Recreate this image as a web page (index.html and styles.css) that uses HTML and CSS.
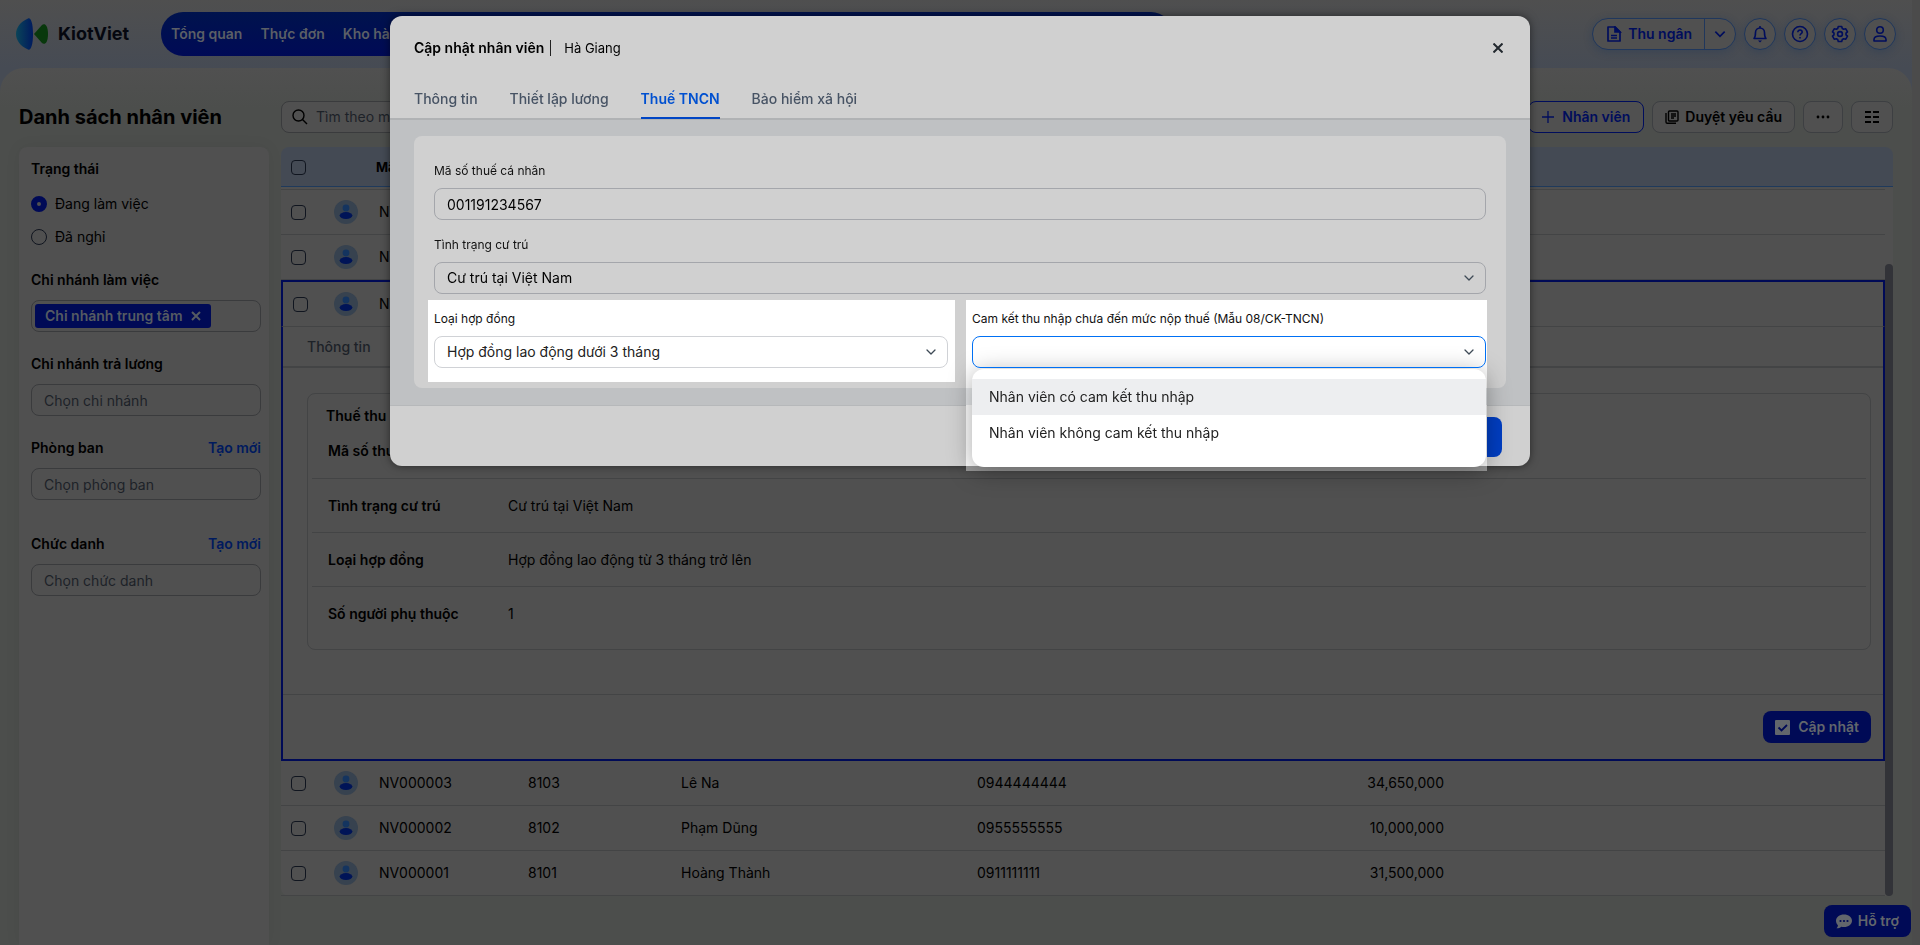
FILE: index.html
```html
<!DOCTYPE html>
<html lang="vi">
<head>
    <meta charset="UTF-8">
    <meta name="viewport" content="width=device-width, initial-scale=1.0">
    <title>Danh sách nhân viên - KiotViet</title>
    <link rel="stylesheet" href="styles.css">
</head>
<body>
    <svg class="sprite" aria-hidden="true">
        <symbol id="avatar" viewBox="0 0 24 24">
            <circle cx="12" cy="12" r="12" fill="#37424f"/>
            <circle cx="12" cy="8" r="3.4" fill="#14345f"/>
            <ellipse cx="12" cy="15.6" rx="6.4" ry="3.5" fill="#001457"/>
        </symbol>
        <symbol id="chevron" viewBox="0 0 12 12">
            <path d="M2 4l4 4 4-4" fill="none" stroke="currentColor" stroke-width="1.3" stroke-linecap="round" stroke-linejoin="round"/>
        </symbol>
    </svg>

    <header class="header">
        <a class="logo" href="#">
            <svg width="32" height="32" viewBox="0 0 32 32">
                <defs>
                    <linearGradient id="logo-blue" x1="0" x2="1">
                        <stop offset="0" stop-color="#0a4458"/>
                        <stop offset="1" stop-color="#001a5e"/>
                    </linearGradient>
                </defs>
                <path d="M12 0.5C14.500 -1 17 4 17 16s-2.500 17-5 15.500C4 28 0 22 0 16S4 4 12 0.500z" fill="url(#logo-blue)"/>
                <path d="M18 16l8-9c2-2 6-1 6 9s-4 11-6 9z" fill="#08380c"/>
            </svg>
            <span>KiotViet</span>
        </a>
        <nav class="main-nav">
            <a href="#">Tổng quan</a>
            <a href="#">Thực đơn</a>
            <a href="#">Kho hàng</a>
        </nav>
        <div class="header-tools">
            <div class="cashier">
                <button type="button" class="cashier-main">
                    <svg width="16" height="16" viewBox="0 0 16 16" fill="none" stroke="currentColor" stroke-width="1.7">
                        <path d="M2 1h7l5 5v9H2z" stroke-linejoin="round"/>
                        <path d="M9 1v5h5z" fill="currentColor"/>
                        <path d="M5 9.500h6M5 12h6"/>
                    </svg>
                    Thu ngân
                </button>
                <button type="button" class="cashier-more" aria-label="Mở thêm">
                    <svg width="14" height="14" viewBox="0 0 12 12"><path d="M2 4l4 4 4-4" fill="none" stroke="currentColor" stroke-width="1.4"/></svg>
                </button>
            </div>
            <button type="button" class="round-button" aria-label="Thông báo">
                <svg width="18" height="18" viewBox="0 0 18 18" fill="none" stroke="currentColor" stroke-width="1.6">
                    <path d="M3 13.500c1.500-1.500 1.500-3 1.500-6a4.500 4.500 0 0 1 9 0c0 3 0 4.500 1.500 6z" stroke-linejoin="round"/>
                    <path d="M9 1v2"/>
                    <path d="M7 15.500h4l-2 2z" fill="currentColor" stroke="none"/>
                </svg>
            </button>
            <button type="button" class="round-button" aria-label="Trợ giúp">
                <svg width="18" height="18" viewBox="0 0 18 18" fill="none" stroke="currentColor" stroke-width="1.6">
                    <circle cx="9" cy="9" r="7.500"/>
                    <path d="M6.800 7.200c0-3 4.600-2.800 4.400 0-.1 1.400-2.200 1.500-2.200 3.200M9 11.900v1.600"/>
                </svg>
            </button>
            <button type="button" class="round-button" aria-label="Thiết lập">
                <svg width="18" height="18" viewBox="0 0 18 18" fill="none" stroke="currentColor" stroke-width="1.6">
                    <path d="M7.300 1.500h3.400l.6 2 1.400.8 2.100-.5 1.700 3L15 8.200v1.600l1.500 1.400-1.700 3-2.100-.5-1.400.8-.6 2H7.300l-.6-2-1.400-.8-2.100.5-1.700-3L3 9.800V8.200L1.500 6.800l1.700-3 2.100.5 1.400-.8z" stroke-linejoin="round"/>
                    <circle cx="9" cy="9" r="2.400"/>
                </svg>
            </button>
            <button type="button" class="round-button" aria-label="Tài khoản">
                <svg width="18" height="18" viewBox="0 0 18 18" fill="none" stroke="currentColor" stroke-width="1.6">
                    <circle cx="9" cy="5" r="3.300"/>
                    <path d="M3 16v-1.500C3 12 5 11 9 11s6 1 6 3.500V16z" stroke-linejoin="round"/>
                </svg>
            </button>
        </div>
    </header>

    <main class="content">
        <h1 class="page-title">Danh sách nhân viên</h1>

        <div class="toolbar">
            <label class="search">
                <svg width="16" height="16" viewBox="0 0 16 16" fill="none" stroke="currentColor" stroke-width="1.4">
                    <circle cx="6.500" cy="6.500" r="5.500"/>
                    <path d="M10.500 10.500L15 15"/>
                </svg>
                <input type="text" placeholder="Tìm theo mã, tên nhân viên" aria-label="Tìm kiếm">
            </label>
            <div class="actions">
                <button type="button" class="action primary">
                    <svg width="12" height="12" viewBox="0 0 12 12" stroke="currentColor" stroke-width="1.3"><path d="M6 0v12M0 6h12"/></svg>
                    Nhân viên
                </button>
                <button type="button" class="action">
                    <svg width="14" height="14" viewBox="0 0 14 14" fill="none" stroke="currentColor" stroke-width="1.4">
                        <rect x="3.500" y="1" width="9.500" height="10" rx="1"/>
                        <path d="M1 3v9q0 1.300 1.300 1.300H11M6 4h5M6 6h5M6 8h3"/>
                    </svg>
                    Duyệt yêu cầu
                </button>
                <button type="button" class="action action-dots" aria-label="Thao tác khác">
                    <svg width="14" height="4" viewBox="0 0 14 4" fill="currentColor"><circle cx="2" cy="2" r="1.400"/><circle cx="7" cy="2" r="1.400"/><circle cx="12" cy="2" r="1.400"/></svg>
                </button>
                <button type="button" class="action action-columns" aria-label="Chọn cột">
                    <svg width="14" height="12" viewBox="0 0 14 12" stroke="currentColor" stroke-width="2"><path d="M0 1h6M8 1h6M0 6h6M8 6h6M0 11h6M8 11h6"/></svg>
                </button>
            </div>
        </div>

        <aside class="filters">
            <fieldset class="filter">
                <legend class="filter-title">Trạng thái</legend>
                <label class="option"><input type="radio" name="status" checked> Đang làm việc</label>
                <label class="option"><input type="radio" name="status"> Đã nghỉ</label>
            </fieldset>
            <div class="filter">
                <div class="filter-title">Chi nhánh làm việc</div>
                <div class="tag-box">
                    <button type="button" class="tag">Chi nhánh trung tâm
                        <svg width="10" height="10" viewBox="0 0 10 10" stroke="currentColor" stroke-width="2"><path d="M1 1l8 8M9 1L1 9"/></svg>
                    </button>
                </div>
            </div>
            <div class="filter">
                <label class="filter-title" for="payroll-branch">Chi nhánh trả lương</label>
                <input class="filter-input" id="payroll-branch" type="text" placeholder="Chọn chi nhánh">
            </div>
            <div class="filter filter-wide">
                <div class="filter-title">
                    <label for="department">Phòng ban</label>
                    <a href="#">Tạo mới</a>
                </div>
                <input class="filter-input" id="department" type="text" placeholder="Chọn phòng ban">
            </div>
            <div class="filter">
                <div class="filter-title">
                    <label for="position">Chức danh</label>
                    <a href="#">Tạo mới</a>
                </div>
                <input class="filter-input" id="position" type="text" placeholder="Chọn chức danh">
            </div>
        </aside>

        <section class="grid-wrap">
            <table class="grid">
                <colgroup>
                    <col class="col-check"><col class="col-avatar"><col class="col-code"><col class="col-timekeeping">
                    <col class="col-name"><col class="col-phone"><col class="col-salary"><col>
                </colgroup>
                <thead>
                    <tr>
                        <th><input type="checkbox" aria-label="Chọn tất cả"></th>
                        <th></th>
                        <th class="head-code" colspan="6">Mã NV</th>
                    </tr>
                </thead>
                <tbody>
                    <tr class="spacer"><td colspan="8"></td></tr>
                    <tr>
                        <td><input type="checkbox" aria-label="Chọn NV000006"></td>
                        <td><svg class="avatar"><use href="#avatar"/></svg></td>
                        <td colspan="6">NV000006</td>
                    </tr>
                    <tr>
                        <td><input type="checkbox" aria-label="Chọn NV000005"></td>
                        <td><svg class="avatar"><use href="#avatar"/></svg></td>
                        <td colspan="6">NV000005</td>
                    </tr>
                    <tr class="selected">
                        <td><input type="checkbox" aria-label="Chọn NV000004"></td>
                        <td><svg class="avatar"><use href="#avatar"/></svg></td>
                        <td colspan="6">NV000004</td>
                    </tr>
                    <tr class="detail">
                        <td colspan="8">
                            <div class="detail-tabs"><a href="#">Thông tin</a></div>
                            <div class="detail-card">
                                <h2>Thuế thu nhập cá nhân</h2>
                                <dl class="info">
                                    <div><dt>Mã số thuế</dt><dd></dd></div>
                                    <div><dt>Tình trạng cư trú</dt><dd>Cư trú tại Việt Nam</dd></div>
                                    <div><dt>Loại hợp đồng</dt><dd>Hợp đồng lao động từ 3 tháng trở lên</dd></div>
                                    <div><dt>Số người phụ thuộc</dt><dd>1</dd></div>
                                </dl>
                            </div>
                            <div class="detail-actions">
                                <button type="button" class="update-button">
                                    <svg width="15" height="15" viewBox="0 0 15 15">
                                        <rect width="15" height="15" rx="1" fill="currentColor"/>
                                        <path d="M3.500 7.500l3 3 5.500-5.500" fill="none" stroke="#000a56" stroke-width="1.800"/>
                                    </svg>
                                    Cập nhật
                                </button>
                            </div>
                        </td>
                    </tr>
                    <tr>
                        <td><input type="checkbox" aria-label="Chọn NV000003"></td>
                        <td><svg class="avatar"><use href="#avatar"/></svg></td>
                        <td>NV000003</td><td>8103</td><td>Lê Na</td><td>0944444444</td><td class="money">34,650,000</td><td></td>
                    </tr>
                    <tr>
                        <td><input type="checkbox" aria-label="Chọn NV000002"></td>
                        <td><svg class="avatar"><use href="#avatar"/></svg></td>
                        <td>NV000002</td><td>8102</td><td>Phạm Dũng</td><td>0955555555</td><td class="money">10,000,000</td><td></td>
                    </tr>
                    <tr>
                        <td><input type="checkbox" aria-label="Chọn NV000001"></td>
                        <td><svg class="avatar"><use href="#avatar"/></svg></td>
                        <td>NV000001</td><td>8101</td><td>Hoàng Thành</td><td>0911111111</td><td class="money">31,500,000</td><td></td>
                    </tr>
                </tbody>
            </table>
            <div class="scroll-thumb"></div>
        </section>
    </main>

    <button type="button" class="support">
        <svg width="16" height="15" viewBox="0 0 16 15">
            <path d="M8 0.500c4.500 0 8 2.700 8 6.300s-3.500 6.300-8 6.300c-1 0-2-.1-2.800-.4C4 13.800 2 14.500 0.500 14.300c1-1 1.400-2 1.400-3C0.700 10.200 0 8.600 0 6.800 0 3.200 3.500.5 8 .5z" fill="currentColor"/>
            <g fill="#000a56"><circle cx="4.500" cy="7" r="1.100"/><circle cx="8" cy="7" r="1.100"/><circle cx="11.500" cy="7" r="1.100"/></g>
        </svg>
        Hỗ trợ
    </button>

    <div class="modal" role="dialog" aria-labelledby="modal-title">
        <div class="modal-header">
            <div class="modal-name">
                <h2 id="modal-title">Cập nhật nhân viên</h2>
                <span class="employee">Hà Giang</span>
            </div>
            <button type="button" class="close" aria-label="Đóng">
                <svg width="10" height="10" viewBox="0 0 10 10" stroke="currentColor" stroke-width="2"><path d="M0.500 0.500l9 9M9.500 0.500l-9 9"/></svg>
            </button>
        </div>
        <nav class="tabs">
            <a href="#">Thông tin</a>
            <a href="#">Thiết lập lương</a>
            <a href="#" class="active">Thuế TNCN</a>
            <a href="#">Bảo hiểm xã hội</a>
        </nav>
        <div class="modal-body">
            <form class="form-card">
                <div class="field full">
                    <label for="tax-code">Mã số thuế cá nhân</label>
                    <input class="control" id="tax-code" type="text" value="001191234567">
                </div>
                <div class="field full">
                    <label for="residence">Tình trạng cư trú</label>
                    <div class="select-wrap">
                        <select class="control" id="residence"><option>Cư trú tại Việt Nam</option></select>
                        <svg class="arrow"><use href="#chevron"/></svg>
                    </div>
                </div>
                <div class="field spotlight">
                    <label for="contract">Loại hợp đồng</label>
                    <div class="select-wrap">
                        <select class="control" id="contract"><option>Hợp đồng lao động dưới 3 tháng</option></select>
                        <svg class="arrow"><use href="#chevron"/></svg>
                    </div>
                </div>
                <div class="field spotlight spotlight-open">
                    <label for="commitment">Cam kết thu nhập chưa đến mức nộp thuế (Mẫu 08/CK-TNCN)</label>
                    <div class="select-wrap">
                        <ul class="menu">
                            <li><button type="button" class="hovered">Nhân viên có cam kết thu nhập</button></li>
                            <li><button type="button">Nhân viên không cam kết thu nhập</button></li>
                        </ul>
                        <select class="control focused" id="commitment"><option></option></select>
                        <svg class="arrow"><use href="#chevron"/></svg>
                    </div>
                </div>
            </form>
        </div>
        <div class="modal-footer">
            <button type="button" class="save-button" aria-label="Lưu"></button>
        </div>
    </div>
</body>
</html>
```
FILE: styles.css
```css
* {
    box-sizing: border-box;
}

body {
    margin: 0;
    height: 100vh;
    overflow: hidden;
    display: flex;
    flex-direction: column;
    padding-right: 8px;
    background: #4b4b4b;
    color: #000;
    font-family: Inter, sans-serif;
    font-size: 14px;
    line-height: 20px;
}

button,
input,
select {
    font: inherit;
    color: inherit;
    margin: 0;
}

button {
    display: flex;
    align-items: center;
    justify-content: center;
    padding: 0;
    border: none;
    background: none;
    white-space: nowrap;
    cursor: pointer;
}

a {
    color: inherit;
    text-decoration: none;
}

svg {
    display: block;
    flex: none;
}

.sprite {
    position: absolute;
    width: 0;
    height: 0;
}

/* Header */
.header {
    display: flex;
    align-items: center;
    height: 92px;
    margin-bottom: -24px;
    padding: 0 16px 24px;
    flex: none;
    background: linear-gradient(#4f4f4f, #464b54 68px);
}

.logo {
    display: flex;
    align-items: center;
    gap: 10px;
    width: 145px;
    flex: none;
    font-size: 18px;
    font-weight: 700;
    color: #05070f;
}

.main-nav {
    display: flex;
    align-items: center;
    gap: 18px;
    flex: 0 1 1012px;
    height: 44px;
    padding: 0 10px;
    border-radius: 22px;
    background: linear-gradient(#00134d, #000a56);
    color: #5b5f66;
    font-weight: 600;
}

.header-tools {
    display: flex;
    gap: 8px;
    margin-left: auto;
    color: #000d5c;
}

.cashier {
    display: flex;
    height: 32px;
    border: 1px solid #20375c;
    border-radius: 16px;
    background: #505050;
    box-shadow: 0 2px 8px rgba(20, 50, 90, 0.3);
}

.cashier-main {
    gap: 6px;
    padding: 0 12px 0 13px;
    font-weight: 600;
}

.cashier-more {
    width: 31px;
    border-left: 1px solid #20375c;
}

.round-button {
    width: 32px;
    height: 32px;
    border: 1px solid #20375c;
    border-radius: 50%;
    background: #505050;
    box-shadow: 0 2px 8px rgba(20, 50, 90, 0.3);
}

/* Page */
.content {
    flex: 1;
    min-height: 0;
    display: grid;
    grid-template-columns: 250px minmax(0, 1fr);
    grid-template-rows: 32px minmax(0, 1fr);
    gap: 14px 12px;
    padding: 33px 19px 0;
    border-radius: 24px 24px 0 0;
    background: linear-gradient(#505050, #4c4e4c 40px);
}

.page-title {
    margin: 0;
    font-size: 20px;
    line-height: 32px;
    font-weight: 700;
}

.toolbar,
.actions {
    display: flex;
    justify-content: space-between;
    gap: 8px;
}

.search {
    display: flex;
    align-items: center;
    gap: 8px;
    width: 480px;
    padding: 0 10px;
    border: 1px solid #3a3b3d;
    border-radius: 8px;
    background: #505050;
}

.search input {
    flex: 1;
    padding: 0;
    border: none;
    background: none;
}

.search input::placeholder,
.filter-input::placeholder {
    color: #1d2228;
    opacity: 1;
}

.action {
    gap: 6px;
    padding: 0 12px;
    border: 1px solid #3d3f42;
    border-radius: 8px;
    background: #505050;
    font-weight: 600;
}

.action.primary {
    gap: 8px;
    padding: 0 13px;
    border-color: #000d5c;
    color: #000d5c;
}

.action-dots {
    width: 40px;
}

.action-columns {
    width: 42px;
}

/* Filters */
.filters {
    padding: 12px 8px 0 12px;
    border-radius: 8px 8px 0 0;
    background: #505050;
    box-shadow: 0 0 16px rgba(0, 0, 0, 0.06);
}

.filter {
    margin: 0 0 22px;
    padding: 0;
    border: none;
}

fieldset.filter {
    margin-bottom: 17px;
}

.filter-wide {
    margin-bottom: 34px;
}

.filter-title {
    display: flex;
    justify-content: space-between;
    margin-bottom: 10px;
    padding: 0;
    font-weight: 600;
}

legend.filter-title {
    margin-bottom: 8px;
}

.filter-title a {
    color: #001a5e;
}

.option {
    display: flex;
    align-items: center;
    gap: 8px;
    height: 33px;
}

.option input {
    appearance: none;
    width: 16px;
    height: 16px;
    border: 1px solid #10151f;
    border-radius: 50%;
}

.option input:checked {
    border: 6px solid #000a56;
    background: #505050;
}

.filter-input,
.tag-box {
    display: flex;
    width: 100%;
    height: 32px;
    border: 1px solid #3a3b3d;
    border-radius: 8px;
    background: none;
}

.filter-input {
    padding: 0 12px;
}

.tag-box {
    padding: 3px;
}

.tag {
    gap: 8px;
    padding: 0 10px;
    border-radius: 3px;
    background: #000a56;
    color: #555b62;
    font-weight: 600;
}

/* Employee table */
.grid-wrap {
    position: relative;
    align-self: start;
    padding-right: 8px;
    border-radius: 8px;
    background: linear-gradient(#444a54 39px, #1f3a5c 39px 40px, #505050 40px);
}

.grid {
    width: 100%;
    table-layout: fixed;
    border-collapse: separate;
    border-spacing: 0;
}

.col-check { width: 48px; }
.col-avatar { width: 34px; }
.col-code { width: 149px; }
.col-timekeeping { width: 153px; }
.col-name { width: 296px; }
.col-phone { width: 263px; }
.col-salary { width: 236px; }

.grid th {
    height: 40px;
    padding: 0 13px;
    text-align: left;
    font-size: 13px;
    font-weight: 700;
}

.grid td {
    height: 45px;
    padding: 0 16px;
    border-bottom: 1px solid #434445;
}

.grid th:first-child,
.grid td:first-child {
    padding: 0 10px;
}

.grid td:nth-child(2) {
    padding: 0 5px;
}

.grid .spacer td {
    height: 3px;
    padding: 0;
}

.grid input {
    display: block;
    appearance: none;
    width: 15px;
    height: 15px;
    border: 1px solid #10151f;
    border-radius: 4px;
}

.avatar {
    width: 24px;
    height: 24px;
}

.grid .money {
    text-align: right;
}

.grid .selected td {
    height: 47px;
    border-top: 2px solid #000a56;
}

.grid .selected td:first-child {
    border-left: 2px solid #000a56;
}

.grid .selected td:last-child {
    border-right: 2px solid #000a56;
}

.grid .detail td {
    padding: 0;
    border: 2px solid #000a56;
    border-top: none;
}

.detail-tabs {
    display: flex;
    height: 41px;
    align-items: center;
    padding: 1px 24px 0;
    border-bottom: 2px solid #434445;
    color: #1d2228;
    font-weight: 500;
}

.detail-card {
    margin: 25px 12px 0 24px;
    padding: 13px 4px 9px;
    border: 1px solid #434445;
    border-radius: 8px;
}

.detail-card h2 {
    margin: 0 0 0 14px;
    font-size: 14px;
    line-height: 17px;
    font-weight: 600;
}

.info {
    margin: 0;
}

.info div {
    display: flex;
    height: 54px;
    align-items: center;
    padding: 0 16px;
}

.info div + div {
    border-top: 1px solid #434445;
}

.info dt {
    width: 180px;
    font-weight: 600;
}

.info dd {
    margin: 0;
}

.detail-actions {
    display: flex;
    justify-content: flex-end;
    margin-top: 44px;
    padding: 16px 12px;
    border-top: 1px solid #434445;
}

.update-button,
.support {
    gap: 8px;
    height: 32px;
    padding: 0 12px;
    border-radius: 8px;
    background: #000a56;
    color: #62666c;
    font-weight: 600;
}

.scroll-thumb {
    position: absolute;
    top: 117px;
    right: 0;
    bottom: 0;
    width: 8px;
    border-radius: 4px;
    background: #323338;
}

.support {
    position: fixed;
    right: 9px;
    bottom: 8px;
    gap: 6px;
}

/* Modal */
.modal {
    position: fixed;
    top: 16px;
    left: 50%;
    width: 1140px;
    max-width: 100%;
    margin-left: -570px;
    border-radius: 12px;
    background: #d0d0d0;
    box-shadow: 0 0 8px rgba(0, 0, 0, 0.5);
}

.modal-header {
    display: flex;
    align-items: center;
    justify-content: space-between;
    height: 64px;
    padding: 0 24px;
}

.modal-name {
    display: flex;
    align-items: center;
    gap: 6px;
}

.modal-name h2 {
    margin: 0;
    font-size: 14px;
    line-height: 20px;
    font-weight: 600;
}

.employee {
    padding-left: 13px;
    border-left: 1px solid #222;
    font-size: 13px;
    line-height: 16px;
}

.close {
    width: 16px;
    height: 16px;
    color: #22282e;
}

.tabs {
    display: flex;
    gap: 32px;
    height: 40px;
    padding: 0 24px;
    border-bottom: 2px solid #b0b2b4;
    color: #475364;
    font-weight: 500;
}

.tabs a {
    height: 39px;
    line-height: 38px;
}

.tabs .active {
    border-bottom: 2px solid #0045c4;
    color: #0050d0;
    font-weight: 600;
}

.modal-body {
    padding: 16px 24px 17px;
    background: #bfc1c3;
}

.form-card {
    display: grid;
    grid-template-columns: 1fr 1fr;
    gap: 12px 24px;
    padding: 22px 20px 20px;
    border-radius: 8px;
    background: #d0d0d0;
}

.field {
    position: relative;
}

.field.full {
    grid-column: 1 / -1;
}

.field label {
    position: relative;
    display: block;
    padding: 4px 0 8px;
    font-size: 12px;
    line-height: 18px;
    color: #111;
}

.select-wrap {
    position: relative;
}

.control {
    position: relative;
    display: block;
    appearance: none;
    width: 100%;
    height: 32px;
    padding: 0 12px;
    border: 1px solid #a4a6ab;
    border-radius: 8px;
    background: none;
    outline: none;
}

.arrow {
    position: absolute;
    top: 10px;
    right: 11px;
    width: 12px;
    height: 12px;
    color: #3e4a56;
    pointer-events: none;
}

/* White area behind the highlighted fields */
.spotlight::before {
    content: "";
    position: absolute;
    top: -6px;
    right: -7px;
    bottom: -14px;
    left: -6px;
    background: #fff;
}

.spotlight .control {
    border-color: #d0d2d6;
    color: #222;
}

.spotlight .control.focused {
    border-color: #0070f4;
}

.spotlight-open::before {
    right: -1px;
    bottom: -103px;
    background: linear-gradient(#fff 88px, #e8eaec 88px 105px, #fff 105px 166px, #989898 166px);
}

.menu {
    position: absolute;
    top: 33px;
    left: 0;
    right: 0;
    margin: 0;
    padding: 10px 0 16px;
    list-style: none;
    border-radius: 12px;
    background: #fff;
    box-shadow: 0 4px 24px rgba(0, 0, 0, 0.35);
}

.menu button {
    justify-content: flex-start;
    width: 100%;
    height: 36px;
    padding: 0 17px;
    color: #222;
}

.menu .hovered {
    background: #edeef0;
}

.modal-footer {
    display: flex;
    justify-content: flex-end;
    height: 61px;
    padding: 11px 28px;
    border-top: 1px solid #b6b8ba;
}

.save-button {
    width: 100px;
    height: 40px;
    border-radius: 8px;
    background: #003ec2;
}
```
